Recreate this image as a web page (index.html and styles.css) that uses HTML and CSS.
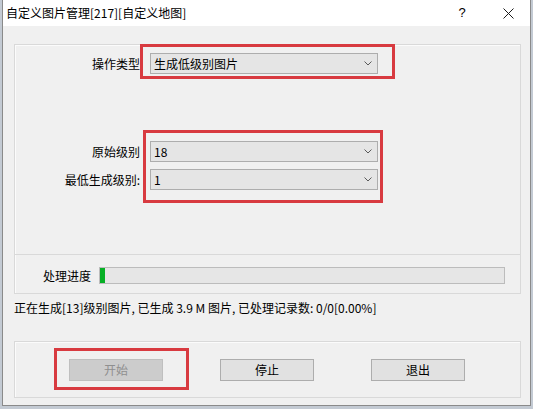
FILE: index.html
```html
<!DOCTYPE html>
<html lang="zh-CN">
<head>
<meta charset="utf-8">
<title>自定义图片管理</title>
<link rel="stylesheet" href="styles.css">
</head>
<body>
<div class="screen">
  <div class="dialog">
    <div class="titlebar">
      <span class="title">自定义图片管理[217][自定义地图]</span>
      <span class="tb-help">?</span>
      <span class="tb-close"><svg width="11" height="11" viewBox="0 0 11 11"><path d="M0.5 0.5L10.5 10.5M10.5 0.5L0.5 10.5" stroke="#1a1a1a" stroke-width="1" fill="none"/></svg></span>
    </div>
    <div class="client">
      <div class="group main-group">
        <div class="settings">
          <div class="row">
            <span class="label">操作类型</span>
            <div class="combo"><span>生成低级别图片</span><svg class="chev" width="8" height="5" viewBox="0 0 8 5"><path d="M0.5 0.5L4 4L7.5 0.5" stroke="#5a5a5a" fill="none"/></svg></div>
          </div>
          <div class="levels">
            <div class="row">
              <span class="label">原始级别</span>
              <div class="combo"><span>18</span><svg class="chev" width="8" height="5" viewBox="0 0 8 5"><path d="M0.5 0.5L4 4L7.5 0.5" stroke="#5a5a5a" fill="none"/></svg></div>
            </div>
            <div class="row">
              <span class="label">最低生成级别:</span>
              <div class="combo"><span>1</span><svg class="chev" width="8" height="5" viewBox="0 0 8 5"><path d="M0.5 0.5L4 4L7.5 0.5" stroke="#5a5a5a" fill="none"/></svg></div>
            </div>
          </div>
        </div>
        <div class="progress-sec">
          <span class="plabel">处理进度</span>
          <div class="progress"><div class="fill" style="width:5px"></div></div>
        </div>
      </div>
      <div class="status">正在生成[13]级别图片, 已生成 3.9 M 图片, 已处理记录数: 0/0[0.00%]</div>
      <div class="group btn-group">
        <button class="btn" disabled>开始</button>
        <button class="btn">停止</button>
        <button class="btn">退出</button>
      </div>
    </div>
  </div>
  <div class="mark mark-op"></div>
  <div class="mark mark-levels"></div>
  <div class="mark mark-start"></div>
</div>
</body>
</html>
```
FILE: styles.css
```css
* { box-sizing: border-box; }
body {
  margin: 0;
  background: #c3cad3;
  font-family: "Noto Sans CJK SC", "Microsoft YaHei", sans-serif;
  font-size: 12px;
  color: #000;
}
.screen {
  position: relative;
  width: 533px;
  height: 409px;
  overflow: hidden;
}
.dialog {
  margin-left: 2px;
  width: 529px;
  border: 1px solid #8a8a8a;
  border-top: none;
  background: #f0f0f0;
}
.titlebar {
  height: 26px;
  background: #fff;
  display: flex;
  align-items: center;
  padding-left: 3px;
}
.title {
  flex: 1;
  line-height: 16px;
  white-space: nowrap;
}
.tb-help {
  width: 40px;
  text-align: center;
  font-family: "Liberation Sans", sans-serif;
  font-size: 13px;
  line-height: 16px;
}
.tb-close {
  width: 48px;
  padding-left: 4px;
  display: flex;
  justify-content: center;
  align-items: center;
}
.client {
  padding: 18px 9px 7px 11px;
}
.group {
  border: 1px solid #d9d9d9;
  box-shadow: inset 1px 1px 0 #fbfbfb;
}
.settings {
  height: 210px;
  padding-top: 8px;
  border-bottom: 1px solid #d9d9d9;
}
.row {
  display: flex;
  align-items: center;
  height: 21px;
}
.label {
  width: 125px;
  text-align: right;
  margin-right: 10px;
  line-height: 16px;
  white-space: nowrap;
}
.combo {
  width: 228px;
  height: 21px;
  background: #e5e5e5;
  border: 1px solid #adadad;
  padding: 0 5px 0 3px;
  display: flex;
  align-items: center;
  justify-content: space-between;
  line-height: 16px;
}
.levels {
  margin-top: 67px;
  display: flex;
  flex-direction: column;
  gap: 7px;
}
.progress-sec {
  height: 38px;
  padding: 12px 15px 0 28px;
  display: flex;
  align-items: flex-start;
}
.plabel {
  line-height: 17px;
  margin-right: 8px;
  white-space: nowrap;
}
.progress {
  flex: 1;
  height: 17px;
  background: #e6e6e6;
  border: 1px solid #bcbcbc;
}
.fill {
  height: 100%;
  background: #06b025;
}
.status {
  margin-top: 6px;
  line-height: 16px;
  white-space: nowrap;
}
.btn-group {
  margin-top: 25px;
  padding: 17px 0 16px 54px;
  display: flex;
  gap: 57px;
}
.btn {
  width: 94px;
  height: 22px;
  padding: 0;
  background: #e1e1e1;
  border: 1px solid #adadad;
  font-family: inherit;
  font-size: 12px;
  color: #000;
  line-height: 16px;
}
.btn:disabled {
  background: #cccccc;
  border-color: #bfbfbf;
  color: #8f8f8f;
}
.mark {
  position: absolute;
  border: 3px solid #d83a40;
}
.mark-op { left: 140px; top: 44px; width: 255px; height: 35px; }
.mark-levels { left: 143px; top: 130px; width: 240px; height: 73px; }
.mark-start { left: 54px; top: 348px; width: 135px; height: 42px; }
```
